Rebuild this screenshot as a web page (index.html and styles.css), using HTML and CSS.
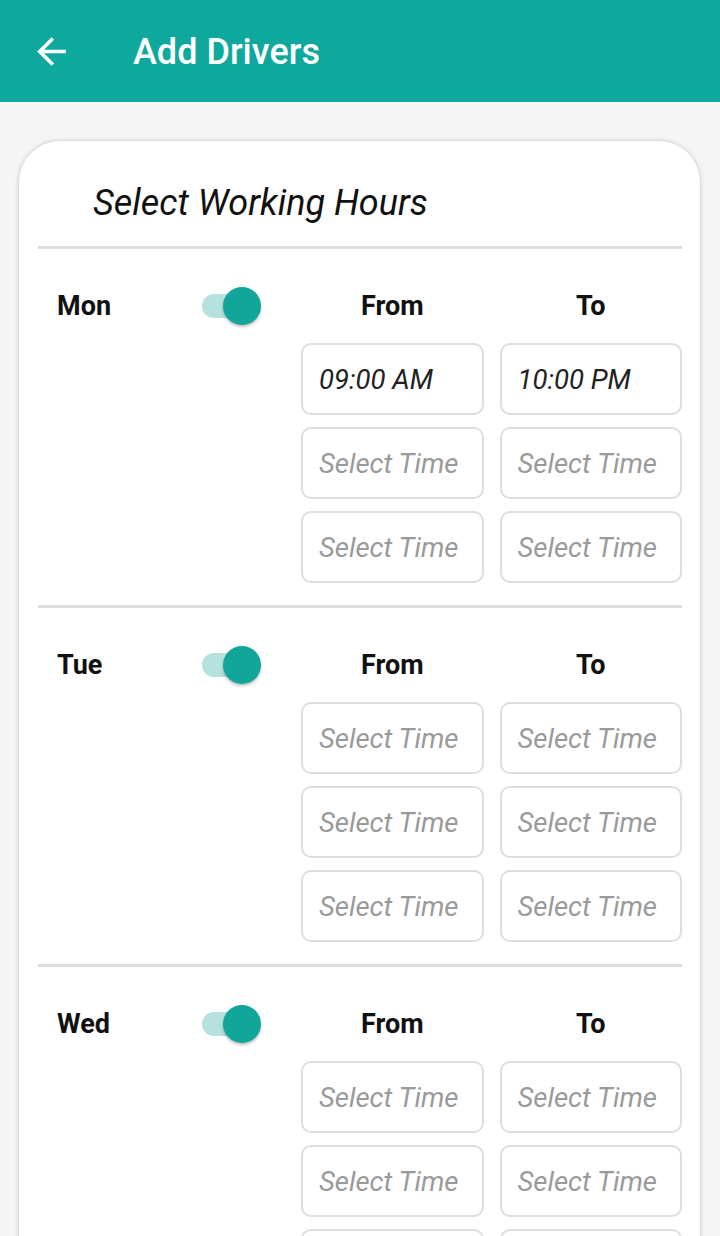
FILE: index.html
```html
<!DOCTYPE html>
<html>
<head>
<meta charset="utf-8">
<link rel="stylesheet" href="styles.css">
</head>
<body>
<header class="appbar">
  <svg class="back" viewBox="0 0 24 24" width="43" height="43"><path fill="#fff" d="M20 11H7.83l5.59-5.59L12 4l-8 8 8 8 1.41-1.41L7.83 13H20v-2z"/></svg>
  <h1 class="appbar-title">Add Drivers</h1>
</header>
<main class="card">
  <h2 class="card-title">Select Working Hours</h2>

  <section class="day">
    <div class="day-head"><span class="day-name">Mon</span><span class="toggle"><span class="thumb"></span></span></div>
    <div class="col-head">From</div>
    <div class="col-head">To</div>
    <div></div><div class="slot filled">09:00 AM</div><div class="slot filled">10:00 PM</div>
    <div></div><div class="slot">Select Time</div><div class="slot">Select Time</div>
    <div></div><div class="slot">Select Time</div><div class="slot">Select Time</div>
  </section>

  <section class="day">
    <div class="day-head"><span class="day-name">Tue</span><span class="toggle"><span class="thumb"></span></span></div>
    <div class="col-head">From</div>
    <div class="col-head">To</div>
    <div></div><div class="slot">Select Time</div><div class="slot">Select Time</div>
    <div></div><div class="slot">Select Time</div><div class="slot">Select Time</div>
    <div></div><div class="slot">Select Time</div><div class="slot">Select Time</div>
  </section>

  <section class="day">
    <div class="day-head"><span class="day-name">Wed</span><span class="toggle"><span class="thumb"></span></span></div>
    <div class="col-head">From</div>
    <div class="col-head">To</div>
    <div></div><div class="slot">Select Time</div><div class="slot">Select Time</div>
    <div></div><div class="slot">Select Time</div><div class="slot">Select Time</div>
    <div></div><div class="slot">Select Time</div><div class="slot">Select Time</div>
  </section>
</main>
</body>
</html>
```
FILE: styles.css
```css
* { box-sizing: border-box; }
html, body { margin: 0; padding: 0; }
body {
  background: #f5f5f5;
  font-family: Roboto, "Noto Sans", sans-serif;
  width: 720px;
  height: 1236px;
  overflow: hidden;
}
.appbar {
  height: 102px;
  background: #0fa89d;
  display: flex;
  align-items: center;
}
.back { margin-left: 30px; flex: none; }
.appbar-title {
  margin: 2px 0 0 60px;
  color: #fff;
  font-weight: 500;
  font-size: 36px;
}
.card {
  margin: 38px 19px 0 18px;
  background: #fff;
  border: 1px solid #dcdcdc;
  border-radius: 42px;
  box-shadow: 0 0 4px rgba(0,0,0,0.12);
  padding: 42px 18px 0 19px;
}
.card-title {
  margin: 0 0 23px 55px;
  font-size: 36px;
  line-height: 40px;
  font-style: italic;
  font-weight: 400;
  color: #111;
}
.day {
  border-top: 3px solid #dddddd;
  padding: 32px 0 22px;
  display: grid;
  grid-template-columns: 247px 1fr 1fr;
  column-gap: 16px;
  row-gap: 12px;
  grid-auto-rows: 72px;
  grid-template-rows: 50px;
}
.day-head {
  display: flex;
  align-items: center;
  position: relative;
}
.day-name {
  margin-left: 19px;
  font-weight: 700;
  font-size: 27px;
  color: #111;
}
.toggle {
  position: absolute;
  left: 164px;
  top: 13px;
  width: 46px;
  height: 24px;
  border-radius: 12px;
  background: #b5e2de;
}
.thumb {
  position: absolute;
  left: 21px;
  top: -7px;
  width: 38px;
  height: 38px;
  border-radius: 50%;
  background: #12a69a;
  box-shadow: 0 2px 3px rgba(0,0,0,0.25);
}
.col-head {
  display: flex;
  align-items: center;
  justify-content: center;
  font-weight: 700;
  font-size: 27px;
  color: #111;
}
.slot {
  border: 2px solid #dedede;
  border-radius: 10px;
  display: flex;
  align-items: center;
  padding-left: 16px;
  font-style: italic;
  font-size: 27.5px;
  color: #9a9a9a;
  white-space: nowrap;
  overflow: hidden;
}
.slot.filled { color: #222; }
```
